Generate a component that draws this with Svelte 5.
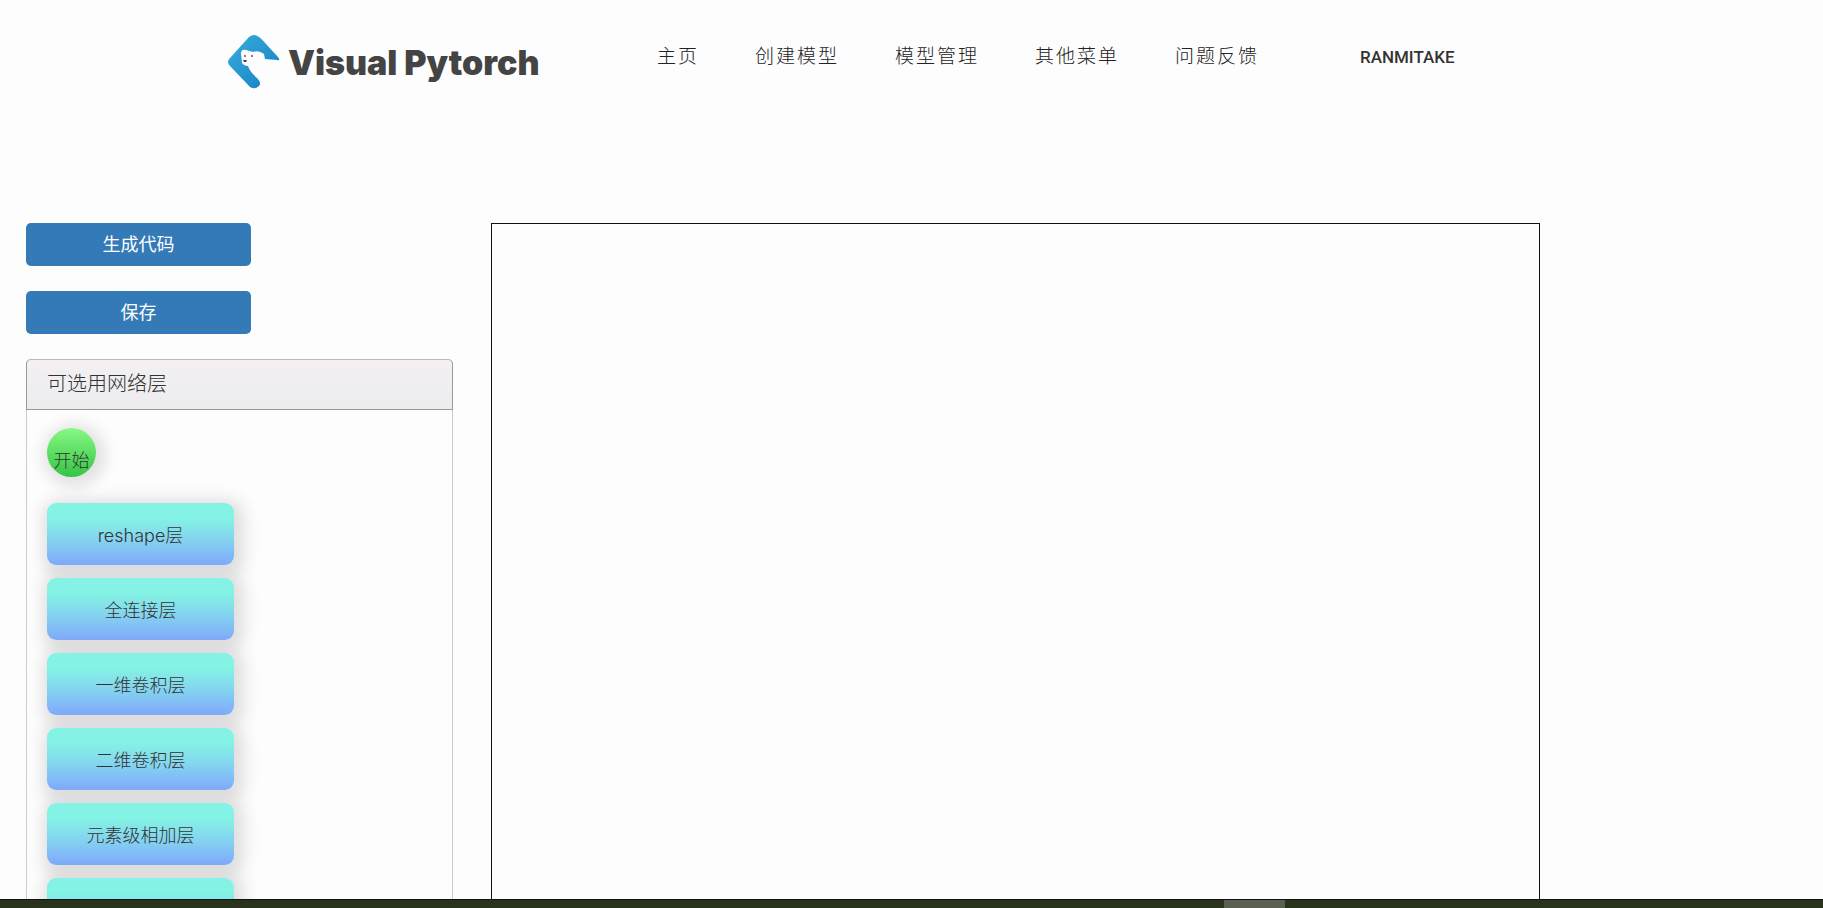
<script>
  const menu = ['主页', '创建模型', '模型管理', '其他菜单', '问题反馈'];
  const layers = [
    'reshape层',
    '全连接层',
    '一维卷积层',
    '二维卷积层',
    '元素级相加层',
    '',
  ];
</script>

<div class="screen">
  <div class="page">
    <header>
      <a class="logo" href="#home">
        <svg viewBox="0 0 52 54" width="52" height="54">
          <defs>
            <linearGradient id="logo-blue" x1="0" y1="0" x2="1" y2="1">
              <stop offset="0" stop-color="#38addc" />
              <stop offset="1" stop-color="#1480c4" />
            </linearGradient>
          </defs>
          <path
            fill="url(#logo-blue)"
            d="M21 2Q26 -2 31 2Q35 5 38 9L50 22Q53 26 49 25L37 24L36 19Q31 15 25 17L18 15Q13 14 13 19L14 28Q16 31 20 31Q22 37 29 43Q34 48 31 51Q27 55 22 52L2 31Q-2 27 2 23Z"
          />
          <circle cx="17" cy="21" r="1" fill="#557" />
          <circle cx="24" cy="21" r="1" fill="#557" />
          <path fill="#446" d="M15 25h4l-1 2h-2z" />
        </svg>
        <span>Visual Pytorch</span>
      </a>
      <nav>
        {#each menu as item}
          <a href="#menu">{item}</a>
        {/each}
      </nav>
      <a class="user" href="#user">RANMITAKE</a>
    </header>

    <main>
      <aside>
        <button class="btn">生成代码</button>
        <button class="btn">保存</button>
        <section class="panel">
          <h2>可选用网络层</h2>
          <div class="layers">
            <button class="start">开始</button>
            {#each layers as layer}
              <button class="layer">{layer}</button>
            {/each}
          </div>
        </section>
      </aside>
      <div class="canvas"></div>
    </main>
  </div>
  <div class="taskbar"><span></span></div>
</div>

<style>
  :global(body) {
    margin: 0;
    background: #fdfdfd;
  }
  .screen {
    display: flex;
    flex-direction: column;
    height: 100vh;
    overflow: hidden;
    color: #333;
    font-family: Inter, 'Noto Sans CJK SC', sans-serif;
    font-size: 18px;
    font-weight: 300;
  }
  .page {
    display: flex;
    flex-direction: column;
    flex: 1;
    min-height: 0;
    overflow: hidden;
  }
  a {
    color: inherit;
    text-decoration: none;
    white-space: nowrap;
  }
  button {
    padding: 0;
    border: none;
    color: inherit;
    font: inherit;
    cursor: pointer;
  }
  header {
    display: flex;
    flex-shrink: 0;
    align-items: flex-start;
    height: 188px;
    padding: 35px 12.5% 0;
  }
  .logo {
    display: flex;
    align-items: center;
    gap: 8px;
    width: 429px;
    color: #444;
    font-size: 34px;
    font-weight: 900;
  }
  nav {
    display: flex;
    gap: 56px;
    padding-top: 8px;
    color: #222;
    font-size: 19px;
    letter-spacing: 2px;
    line-height: 28px;
  }
  .user {
    margin-left: 101px;
    padding-top: 8px;
    font-family: Roboto, sans-serif;
    font-size: 17px;
    font-weight: 500;
    line-height: 28px;
  }
  main {
    display: grid;
    flex: 1;
    grid-template-columns: 427fr 1049fr 219fr;
    gap: 38px;
    min-height: 0;
    padding: 0 26px;
  }
  aside {
    display: flex;
    flex-direction: column;
    align-items: flex-start;
    gap: 25px;
  }
  .btn {
    flex-shrink: 0;
    width: 225px;
    height: 43px;
    padding-bottom: 4px;
    border-radius: 5px;
    background: #337ab7;
    color: #fff;
    font-weight: 400;
  }
  .panel {
    box-sizing: border-box;
    width: 100%;
    border: 1px solid #ccc;
    border-radius: 5px;
  }
  h2 {
    margin: -1px -1px 0;
    padding: 10px 20px;
    border: 1px solid #999;
    border-top-color: #bbb;
    border-radius: 5px 5px 0 0;
    background: linear-gradient(#f4f0f4, #ececee);
    color: #333;
    font-size: 20px;
    font-weight: 300;
    line-height: 29px;
  }
  .layers {
    display: flex;
    flex-direction: column;
    align-items: flex-start;
    gap: 13px;
    padding: 18px 20px;
  }
  .start {
    width: 49px;
    height: 49px;
    margin-bottom: 13px;
    padding-top: 12px;
    border-radius: 50%;
    background: linear-gradient(#87f884, #35c443);
    box-shadow: 3px 3px 14px 7px rgba(80, 60, 80, 0.14);
    white-space: nowrap;
  }
  .layer {
    width: 187px;
    height: 62px;
    border-radius: 9px;
    background: linear-gradient(#84f2e4 25%, #84d8ee 55%, #80aefa 95%);
    box-shadow: 3px 4px 16px 7px rgba(70, 60, 70, 0.16);
  }
  .canvas {
    border: 1px solid #111;
    border-bottom: none;
  }
  .taskbar {
    display: flex;
    flex-shrink: 0;
    height: 8px;
    padding-left: 67.15%;
    border-top: 1px solid #111;
    background: #29321b;
  }
  .taskbar span {
    width: 61px;
    background: #596052;
  }
</style>
